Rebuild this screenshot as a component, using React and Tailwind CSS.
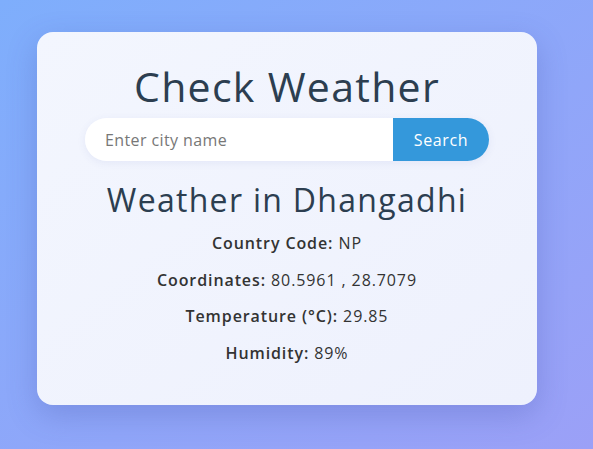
import React, { useState } from 'react';

const rows = [
  { label: 'Country Code:', value: 'NP' },
  { label: 'Coordinates:', value: '80.5961 , 28.7079' },
  { label: 'Temperature (°C):', value: '29.85' },
  { label: 'Humidity:', value: '89%' },
];

const App = () => {
  const [city, setCity] = useState('');

  return (
    <div
      className="w-[593px] h-[449px] overflow-hidden bg-gradient-to-br from-[#7eaefc] to-[#9ba0f7] pl-[37px] pt-[32px]"
      style={{ fontFamily: '"Open Sans", "Noto Sans", sans-serif' }}
    >
      <div className="w-[500px] h-[373px] rounded-2xl bg-gradient-to-br from-[#f3f6fe] to-[#eef1fd] shadow-[0_10px_30px_rgba(60,70,160,0.25)] flex flex-col items-center pt-[30px]">
        <h1 className="text-[41px] leading-[48px] text-[#2c3e50] font-normal tracking-[1.3px]">Check Weather</h1>

        <div className="mt-[8px] flex w-[404px] h-[43px] rounded-full overflow-hidden shadow-[0_2px_8px_rgba(60,80,160,0.08)]">
          <input
            type="text"
            value={city}
            onChange={(e) => setCity(e.target.value)}
            placeholder="Enter city name"
            className="flex-1 bg-white pl-[20px] text-[16px] tracking-[0.4px] text-[#333] placeholder:text-[#777] outline-none"
          />
          <button className="w-[96px] bg-[#3498db] text-white text-[16px] tracking-[0.6px] font-medium">Search</button>
        </div>

        <h2 className="mt-[20px] text-[32px] leading-[38px] text-[#2c3e50] font-normal tracking-[1.3px]">Weather in Dhangadhi</h2>

        <div className="mt-[12px] flex flex-col items-center gap-[12.5px]">
          {rows.map((row) => (
            <p key={row.label} className="text-[16px] leading-[24px] text-[#333] tracking-[0.9px]">
              <span className="font-semibold">{row.label}</span> {row.value}
            </p>
          ))}
        </div>
      </div>
    </div>
  );
};

export default App;
